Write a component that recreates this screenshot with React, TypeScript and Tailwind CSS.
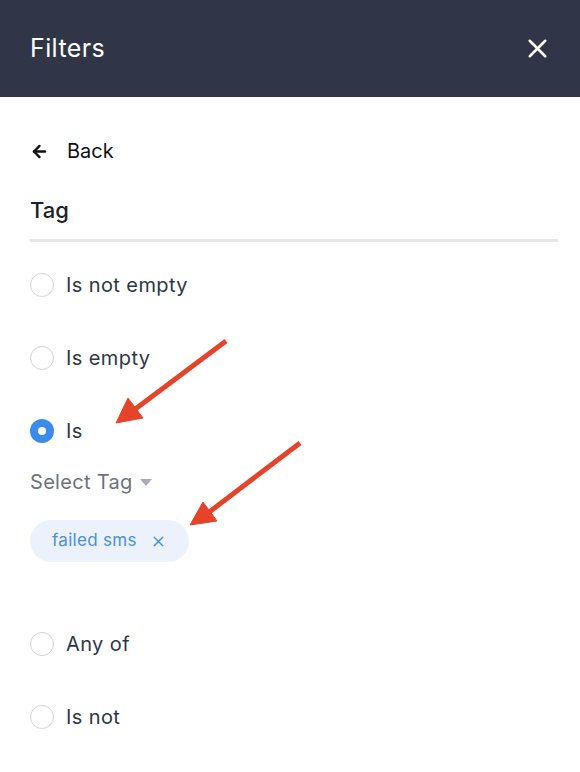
import { ArrowLeft, X } from "lucide-react";

const options = ["Is not empty", "Is empty", "Is"];

function Radio({ checked }: { checked?: boolean }) {
  if (checked) {
    return (
      <span className="grid size-6 place-items-center rounded-full bg-[#3b8beb]">
        <span className="size-2 rounded-full bg-white" />
      </span>
    );
  }
  return <span className="size-6 rounded-full border border-[#cfd3d8] bg-white" />;
}

function Option({ label, checked }: { label: string; checked?: boolean }) {
  return (
    <label className="flex h-6 items-center gap-3">
      <Radio checked={checked} />
      <span className="text-[20px] tracking-[0.4px] text-[#2d3748]">{label}</span>
    </label>
  );
}

export default function App() {
  return (
    <div className="relative h-[772px] w-[580px] overflow-hidden bg-white font-['Inter',sans-serif]">
      <header className="flex h-[97px] items-center justify-between bg-[#303647] pl-[30px] pr-[27px]">
        <h1 className="text-[25px] font-normal tracking-[0.4px] text-white">Filters</h1>
        <X className="size-[31px] text-white" strokeWidth={2} />
      </header>

      <div className="pl-[30px] pr-[22px]">
        <button className="mt-[39px] flex items-center gap-[18px] text-[20px] text-[#111]">
          <ArrowLeft className="size-[19px]" strokeWidth={3} />
          Back
        </button>

        <h2 className="mt-[33px] text-[22px] font-medium leading-none text-[#1a202c]">Tag</h2>
        <div className="mt-[18px] h-[3px] bg-[#e5e7eb]" />

        <div className="mt-[31px] flex flex-col gap-[49px]">
          {options.map((o) => (
            <Option key={o} label={o} checked={o === "Is"} />
          ))}
        </div>

        <div className="mt-[24px] flex items-center gap-[7px] text-[20px] tracking-[0.3px] text-[#6b737c]">
          Select Tag
          <svg width="12" height="7" viewBox="0 0 12 7">
            <path d="M0 0h12L6 7z" fill="#a7adb2" />
          </svg>
        </div>

        <div className="mt-[23px] inline-flex h-[42px] items-center gap-[13px] rounded-full bg-[#ebf2fc] pl-[22px] pr-[22px] text-[17px] tracking-[0.3px] text-[#4a8fe4]">
          failed sms
          <X className="size-[17px]" strokeWidth={2} />
        </div>

        <div className="mt-[70px] flex flex-col gap-[49px]">
          <Option label="Any of" />
          <Option label="Is not" />
        </div>
      </div>

      <svg className="pointer-events-none absolute left-0 top-0" width="580" height="772">
        <g stroke="#e5432a" strokeWidth="5" fill="#e5432a">
          <line x1="226" y1="341" x2="130" y2="413" />
          <polygon points="116,423 128,398 143,418" strokeWidth="1" />
          <line x1="300" y1="443" x2="204" y2="516" />
          <polygon points="190,525 203,502 217,521" strokeWidth="1" />
        </g>
      </svg>
    </div>
  );
}
